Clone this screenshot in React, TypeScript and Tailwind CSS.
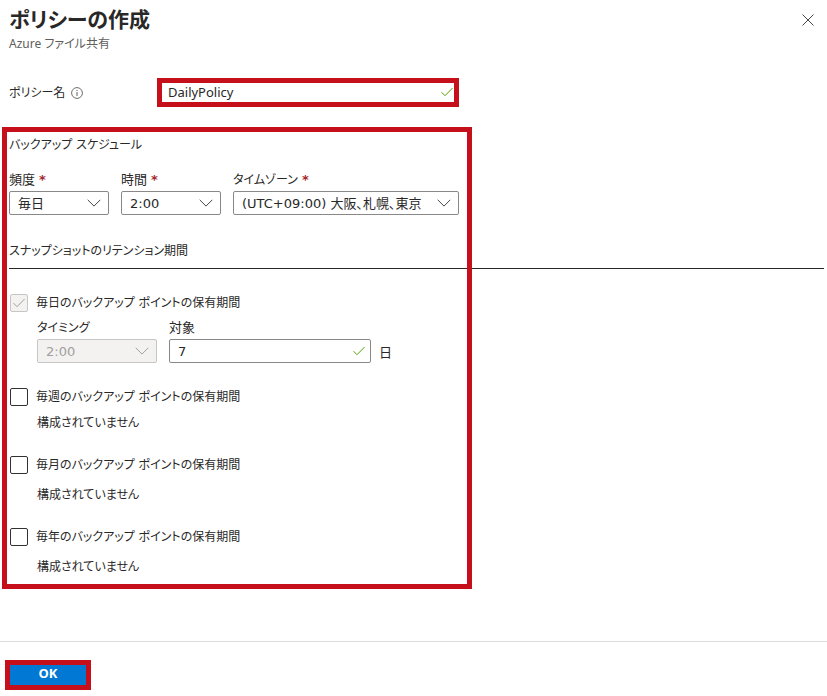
import { useId, type ReactNode } from 'react'

const periods = [
  { label: '毎週のバックアップ ポイントの保有期間', rowClass: 'mt-[22px] gap-y-1' },
  { label: '毎月のバックアップ ポイントの保有期間', rowClass: 'mt-5 gap-y-2' },
  { label: '毎年のバックアップ ポイントの保有期間', rowClass: 'mt-5 gap-y-2' },
]

function CheckIcon({ className }: { className: string }) {
  return (
    <svg
      aria-hidden="true"
      viewBox="0 0 12 10"
      fill="none"
      stroke="currentColor"
      className={`pointer-events-none absolute h-[10px] w-3 ${className}`}
    >
      <path d="M0.5 5.2 4 8.7 11.6 1" />
    </svg>
  )
}

function Field({
  label,
  required,
  className,
  children,
}: {
  label: string
  required?: boolean
  className: string
  children: (id: string) => ReactNode
}) {
  const id = useId()
  return (
    <div className={className}>
      <label htmlFor={id} className="flex h-6 items-center gap-1 pt-px">
        {label}
        {required && <span className="text-[13px] font-bold text-[#a4262c]">*</span>}
      </label>
      {children(id)}
    </div>
  )
}

function Select({ id, value, disabled }: { id: string; value: string; disabled?: boolean }) {
  return (
    <div className="relative">
      <select
        id={id}
        disabled={disabled}
        className="block h-6 w-full appearance-none rounded-xs border border-[#8a8886] bg-white pt-px pl-2 text-[13px] disabled:border-[#c8c6c4] disabled:bg-[#f3f2f1] disabled:text-[#a19f9d] disabled:opacity-100"
      >
        <option>{value}</option>
      </select>
      <svg
        aria-hidden="true"
        viewBox="0 0 14 8"
        fill="none"
        stroke="currentColor"
        className={`pointer-events-none absolute top-2 right-2 h-2 w-[14px] ${disabled ? 'text-[#a19f9d]' : 'text-[#484644]'}`}
      >
        <path d="M0.7 0.8 7 7.1 13.3 0.8" />
      </svg>
    </div>
  )
}

function PeriodCheckbox({ label, locked }: { label: string; locked?: boolean }) {
  return (
    <label className="flex h-6 items-center gap-2">
      <span className="relative">
        <input
          type="checkbox"
          defaultChecked={locked}
          disabled={locked}
          className="block size-[18px] appearance-none rounded-xs border border-[#323130] bg-white disabled:border-[#c8c6c4] disabled:bg-[#f3f2f1]"
        />
        {locked && <CheckIcon className="top-1 left-[3px] text-[#a19f9d]" />}
      </span>
      {label}
    </label>
  )
}

export default function App() {
  return (
    <main className="bg-white font-['DejaVu_Sans','Noto_Sans_CJK_JP',sans-serif] text-xs text-[#292827] [font-feature-settings:'palt']">
      <header className="flex items-start justify-between pr-3 pl-[9px]">
        <div>
          <h1 className="pt-1 text-[21px] leading-8 font-bold">ポリシーの作成</h1>
          <p className="font-['Noto_Sans','Noto_Sans_CJK_JP',sans-serif] text-xs leading-4 text-[#605e5c]">
            Azure ファイル共有
          </p>
        </div>
        <button type="button" aria-label="閉じる" className="mt-[13px] p-px">
          <svg viewBox="0 0 12 12" fill="none" stroke="#484644" className="size-3">
            <path d="M0.5 0.5 11.5 11.5M11.5 0.5 0.5 11.5" />
          </svg>
        </button>
      </header>

      <div className="mt-[26px] flex items-center pl-[9px]">
        <div className="flex w-[148px] items-center gap-[6px]">
          <label htmlFor="policy-name">ポリシー名</label>
          <svg
            role="img"
            aria-label="情報"
            viewBox="0 0 12 12"
            fill="none"
            stroke="#605e5c"
            className="size-3"
          >
            <circle cx="6" cy="6" r="5.4" strokeWidth="0.9" />
            <path d="M6 5v4M6 3v1" />
          </svg>
        </div>
        <div className="relative w-[302px] border-5 border-[#c50f1a]">
          <input
            id="policy-name"
            type="text"
            defaultValue="DailyPolicy"
            className="block h-[19px] w-full pr-6 pb-px pl-[6px] font-['Noto_Sans',sans-serif] text-[13px] outline-none"
          />
          <CheckIcon className="top-1 right-px text-[#57a300]" />
        </div>
      </div>

      <section className="relative mt-5 pt-[6px] pr-[3px] pb-3 pl-[9px]">
        <h2 className="leading-6">バックアップ スケジュール</h2>
        <div className="mt-[10px] flex gap-3">
          <Field label="頻度" required className="w-[100px] text-[13px]">
            {(id) => <Select id={id} value="毎日" />}
          </Field>
          <Field label="時間" required className="w-[100px] text-[13px]">
            {(id) => <Select id={id} value="2:00" />}
          </Field>
          <Field label="タイムゾーン" required className="w-[226px]">
            {(id) => <Select id={id} value="(UTC+09:00) 大阪、札幌、東京" />}
          </Field>
        </div>

        <h2 className="mt-6 border-b border-[#292827] pb-[5px] leading-6">
          スナップショットのリテンション期間
        </h2>

        <div className="mt-[22px] pl-px">
          <PeriodCheckbox label="毎日のバックアップ ポイントの保有期間" locked />
          <div className="flex items-end gap-3 pl-[27px]">
            <Field label="タイミング" className="w-[120px]">
              {(id) => <Select id={id} value="2:00" disabled />}
            </Field>
            <Field label="対象" className="w-[202px] text-[13px]">
              {(id) => (
                <div className="relative">
                  <input
                    id={id}
                    type="text"
                    defaultValue="7"
                    className="block h-6 w-full rounded-xs border border-[#8a8886] pr-6 pl-2"
                  />
                  <CheckIcon className="top-[7px] right-[6px] text-[#57a300]" />
                </div>
              )}
            </Field>
            <span className="-ml-1 text-[13px] leading-5">日</span>
          </div>

          {periods.map((period) => (
            <div key={period.label} className={`flex flex-col ${period.rowClass}`}>
              <PeriodCheckbox label={period.label} />
              <p className="pl-[27px] leading-5">構成されていません</p>
            </div>
          ))}
        </div>

        <div className="pointer-events-none absolute inset-y-0 left-[2px] w-[470px] border-5 border-[#c50f1a]" />
      </section>

      <footer className="mt-[52px] border-t border-[#dddddd] pt-[18px] pb-[6px] pl-[5px]">
        <button
          type="button"
          className="block w-[86px] border-5 border-[#c50f1a] bg-[#0078d4] pb-1 font-['Noto_Sans',sans-serif] text-[13px] leading-4 font-bold text-white"
        >
          OK
        </button>
      </footer>
    </main>
  )
}
